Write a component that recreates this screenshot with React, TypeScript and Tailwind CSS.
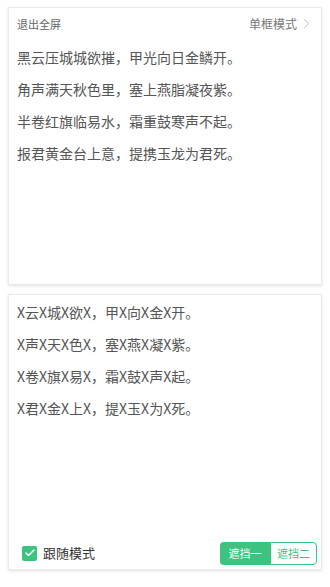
import { Check, ChevronRight } from 'lucide-react';

const poem = [
  '黑云压城城欲摧，甲光向日金鳞开。',
  '角声满天秋色里，塞上燕脂凝夜紫。',
  '半卷红旗临易水，霜重鼓寒声不起。',
  '报君黄金台上意，提携玉龙为君死。',
];

const masked = [
  'X云X城X欲X，甲X向X金X开。',
  'X声X天X色X，塞X燕X凝X紫。',
  'X卷X旗X易X，霜X鼓X声X起。',
  'X君X金X上X，提X玉X为X死。',
];

const font = { fontFamily: '"Noto Sans CJK SC", "Noto Sans", sans-serif' };

export default function App() {
  return (
    <div
      className="w-[330px] h-[587px] bg-white flex flex-col gap-[9px] px-[8px] pt-[7px] pb-[17px]"
      style={font}
    >
      <div className="flex-1 bg-white border border-[#ebebeb] shadow-[0_1px_3px_rgba(0,0,0,0.12)] pl-[8px] pr-[6px] pt-[7px]">
        <div className="flex items-center justify-between leading-[16px]">
          <span className="text-[11px] text-[#666]">退出全屏</span>
          <span className="flex items-center text-[12px] text-[#777]">
            单框模式
            <ChevronRight className="w-[17px] h-[17px] ml-[1px] text-[#bbb]" strokeWidth={1.3} />
          </span>
        </div>
        <div className="mt-[9px]">
          {poem.map((line) => (
            <p key={line} className="text-[14px] leading-[32px] text-[#555]">
              {line}
            </p>
          ))}
        </div>
      </div>

      <div className="flex-1 flex flex-col bg-white border border-[#ebebeb] shadow-[0_1px_3px_rgba(0,0,0,0.12)] px-[8px] pt-[1px] pb-[4px]">
        <div className="flex-1">
          {masked.map((line) => (
            <p key={line} className="text-[14px] leading-[32px] text-[#555]">
              {line}
            </p>
          ))}
        </div>
        <div className="flex items-center justify-between pl-[5px] h-[24px]">
          <label className="flex items-center gap-[6px]">
            <span className="w-[15px] h-[15px] rounded-[2px] bg-[#3cc37f] flex items-center justify-center">
              <Check className="w-[12px] h-[12px] text-white" strokeWidth={3} />
            </span>
            <span className="text-[13px] text-[#333]">跟随模式</span>
          </label>
          <div className="flex h-[23px] text-[11px] mr-[-4px]">
            <span className="w-[50px] flex items-center justify-center bg-[#3cc37f] text-white rounded-l-[4px]">
              遮挡一
            </span>
            <span className="w-[47px] flex items-center justify-center bg-white text-[#3cc37f] border border-[#3cc37f] rounded-r-[4px]">
              遮挡二
            </span>
          </div>
        </div>
      </div>
    </div>
  );
}
